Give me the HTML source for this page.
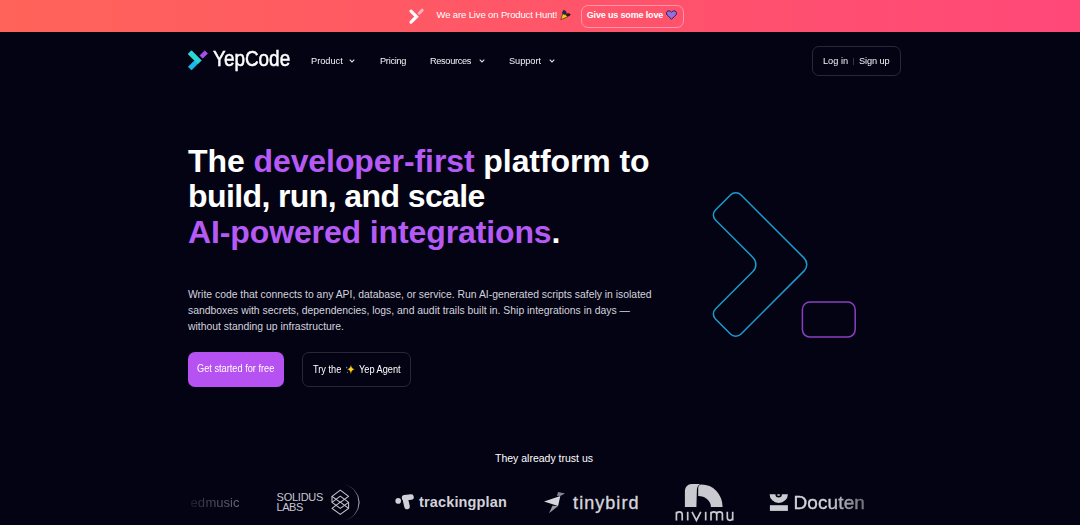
<!DOCTYPE html>
<html><head><meta charset="utf-8">
<style>
*{margin:0;padding:0;box-sizing:border-box}
html,body{width:1080px;height:525px;overflow:hidden;background:#030314;font-family:"Liberation Sans",sans-serif;color:#fff}
.a{position:absolute;white-space:nowrap;line-height:1}
svg.a{line-height:0}
#banner{position:absolute;left:0;top:0;width:1080px;height:32px;background:linear-gradient(90deg,#ff6359 0%,#ff4878 100%)}
.nav{font-size:9.6px;color:#f4f4f8;transform:scaleX(.96);transform-origin:0 0}
h1{position:absolute;left:188px;top:143.8px;font-size:32px;line-height:35.4px;font-weight:bold;white-space:nowrap}
h1 .p{color:#b65af6}
#para{position:absolute;left:188px;top:286.6px;font-size:10.4px;line-height:16px;color:#d4d4dc;white-space:nowrap}
</style></head>
<body>
<div id="banner"></div>
<svg class="a" style="left:405.6px;top:6.8px" width="22" height="20" viewBox="0 0 22 20">
  <path d="M5 4.2 L10.5 9.7 L5 15.2" stroke="#fff" stroke-width="3.2" fill="none" stroke-linecap="round" stroke-linejoin="miter"/>
  <path d="M13.2 6.2 L16.2 3.2" stroke="#ffb3c2" stroke-width="3" stroke-linecap="round"/>
</svg>
<div class="a" style="left:436.5px;top:10.3px;font-size:9.5px;letter-spacing:-0.13px">We are Live on Product Hunt!</div>
<!-- party popper -->
<svg class="a" style="left:559px;top:9px" width="13" height="12" viewBox="559 9 13 12">
  <path d="M560.8 19.6 L563.2 12.6 L567.6 16.8 Z" fill="#f0d21e" stroke="#2a2008" stroke-width=".6" stroke-linejoin="round"/>
  <path d="M562.3 13.2 L563.6 10.2 L565.6 11 L566.4 13.6 L564.2 14.6 Z" fill="#15305a" stroke="#0a1020" stroke-width=".5"/>
  <path d="M566.2 14.2 Q568.6 12.6 570.4 14.4 Q569.8 16.4 567.4 16.2 Z" fill="#3a1e16" stroke="#1a0c08" stroke-width=".5"/>
</svg>
<div class="a" style="left:581px;top:5px;width:103px;height:22.5px;border:1.5px solid #ff94ab;border-radius:7px"></div>
<div class="a" style="left:586.7px;top:10.7px;font-size:9px;font-weight:bold;letter-spacing:-0.15px">Give us some love</div>
<svg class="a" style="left:666px;top:10px" width="11" height="10" viewBox="0 0 11 10">
  <path d="M5.5 9.3 L1.2 5 C0 3.8 .3 1.6 1.9 1 C3.3 .5 4.6 1.2 5.5 2.3 C6.4 1.2 7.7 .5 9.1 1 C10.7 1.6 11 3.8 9.8 5 Z" fill="#9270ea" stroke="#2a1838" stroke-width=".9"/>
</svg>

<!-- header -->
<svg class="a" style="left:184px;top:46px" width="28" height="28" viewBox="184 46 28 28">
  <g stroke-width=".6" stroke-linejoin="round">
  <path d="M191.5 50.8 L201.1 60.4 L191.5 70 L188.3 66.8 L194.7 60.4 L188.3 54 Z" fill="#1bb8ea" stroke="#1bb8ea"/>
  <path d="M191.5 50.8 L201.1 60.4 L197.9 63.6 L188.3 54 Z" fill="#2bd6d0" stroke="#2bd6d0"/>
  <path d="M202.7 58.3 L207.6 53.5 L204.8 50.7 L199.9 55.5 Z" fill="#a94ff0" stroke="#a94ff0"/>
  </g>
</svg>
<div class="a" style="left:212.5px;top:48.1px;font-size:22px;transform:scaleX(.86);transform-origin:0 0;-webkit-text-stroke:.5px #fff">YepCode</div>
<div class="a nav" style="left:311px;top:56.4px">Product</div>
<div class="a nav" style="left:380px;top:56.4px;letter-spacing:-0.3px">Pricing</div>
<div class="a nav" style="left:430.4px;top:56.4px;letter-spacing:-0.35px">Resources</div>
<div class="a nav" style="left:508.9px;top:56.4px;letter-spacing:-0.05px">Support</div>
<svg class="a" style="left:349px;top:58.5px" width="6" height="4" viewBox="0 0 6 4"><path d="M.7 .7 L3 3 L5.3 .7" stroke="#dcdce4" stroke-width="1.1" fill="none"/></svg>
<svg class="a" style="left:479px;top:58.5px" width="6" height="4" viewBox="0 0 6 4"><path d="M.7 .7 L3 3 L5.3 .7" stroke="#dcdce4" stroke-width="1.1" fill="none"/></svg>
<svg class="a" style="left:548.5px;top:58.5px" width="6" height="4" viewBox="0 0 6 4"><path d="M.7 .7 L3 3 L5.3 .7" stroke="#dcdce4" stroke-width="1.1" fill="none"/></svg>
<div class="a" style="left:812px;top:46px;width:89px;height:29.5px;border:1px solid #282838;border-radius:7px"></div>
<div class="a nav" style="left:822.8px;top:56.2px">Log in</div>
<div class="a" style="left:853px;top:58px;width:1px;height:6.5px;background:#34344a"></div>
<div class="a nav" style="left:859px;top:56.2px;letter-spacing:-0.1px">Sign up</div>

<h1><span style="letter-spacing:-0.08px">The <span class="p">developer-first</span> platform to</span><br><span style="letter-spacing:-0.6px">build, run, and scale</span><br><span style="letter-spacing:-0.12px"><span class="p">AI-powered integrations</span>.</span></h1>

<div id="para">Write code that connects to any API, database, or service. Run AI-generated scripts safely in isolated<br>sandboxes with secrets, dependencies, logs, and audit trails built in. Ship integrations in days —<br>without standing up infrastructure.</div>

<div class="a" style="left:188px;top:352px;width:96px;height:35px;background:#b752f2;border-radius:7px"></div>
<div class="a" style="left:196.9px;top:364.2px;font-size:10px;transform:scaleX(.922);transform-origin:0 0">Get started for free</div>
<div class="a" style="left:302px;top:352px;width:109px;height:35px;border:1px solid #272735;border-radius:7px"></div>
<div class="a" style="left:312.6px;top:365.3px;font-size:10px;transform:scaleX(.92);transform-origin:0 0">Try the</div>
<svg class="a" style="left:345px;top:364px" width="11" height="11" viewBox="345 364 11 11">
  <path d="M350.9 365 Q351.4 368.6 354.6 369.3 Q351.4 370 350.9 373.9 Q350.4 370 347.2 369.3 Q350.4 368.6 350.9 365Z" fill="#ffd21f" stroke="#5a3a10" stroke-width=".35"/>
  <circle cx="346.6" cy="367.6" r=".8" fill="#2aa0d8"/>
  <circle cx="347.4" cy="372.4" r=".6" fill="#2aa0d8"/>
</svg>
<div class="a" style="left:359px;top:365.3px;font-size:10px;transform:scaleX(.92);transform-origin:0 0">Yep Agent</div>

<svg class="a" style="left:0;top:0" width="1080" height="525" viewBox="0 0 1080 525">
  <path d="M741.05,195.05 L804.14,258.14 A9,9 0 0 1 804.14,270.86 L741.05,333.95 A7.5,7.5 0 0 1 730.45,333.95 L715.45,318.95 A7,7 0 0 1 715.45,309.05 L752.93,271.57 A10,10 0 0 0 752.93,257.43 L715.45,219.95 A7,7 0 0 1 715.45,210.05 L730.45,195.05 A7.5,7.5 0 0 1 741.05,195.05 Z" fill="none" stroke="#1a9ccc" stroke-width="1.5"/>
  <rect x="802.4" y="302" width="52.8" height="35.1" rx="7.5" fill="none" stroke="#8a3fc0" stroke-width="1.5"/>
</svg>

<div class="a" style="left:495px;top:452.7px;font-size:10.5px">They already trust us</div>

<!-- logos -->
<div class="a" style="left:190.5px;top:495.7px;font-size:13px;color:#c8c8d0;-webkit-mask-image:linear-gradient(90deg,rgba(0,0,0,.12) 0%,rgba(0,0,0,.28) 30%,rgba(0,0,0,.5) 100%);mask-image:linear-gradient(90deg,rgba(0,0,0,.12) 0%,rgba(0,0,0,.28) 30%,rgba(0,0,0,.5) 100%)">ed<span style="margin-left:.5px">music</span></div>
<div class="a" style="left:276.6px;top:491.8px;font-size:11px;color:#c8c8d0;letter-spacing:-0.25px">SOLIDUS</div>
<div class="a" style="left:276.6px;top:502.4px;font-size:11px;color:#c8c8d0;letter-spacing:-0.5px">LABS</div>
<svg class="a" style="left:320px;top:480px" width="45" height="45" viewBox="320 480 45 45">
  <g fill="none" stroke="#c8c8d0" stroke-width="1.05" stroke-linejoin="round">
    <path d="M340.3 490.2 L348.6 496.3 L340.3 502.4 L332 496.3 Z"/>
    <path d="M340.3 496.2 L348.6 502.3 L340.3 508.4 L332 502.3 Z"/>
    <path d="M340.3 502.2 L348.6 508.3 L340.3 514.4 L332 508.3 Z"/>
    <path d="M332 496.3 L332 502.3 M348.6 502.3 L348.6 508.3"/>
  </g>
  <defs><linearGradient id="arcg" x1="0" y1="0" x2="0" y2="1"><stop offset="0" stop-color="#c8c8d0" stop-opacity="0"/><stop offset=".5" stop-color="#c8c8d0"/><stop offset="1" stop-color="#c8c8d0" stop-opacity="0"/></linearGradient></defs>
  <path d="M342.6 484.2 A18.4 18.4 0 0 1 342.6 520.8" fill="none" stroke="url(#arcg)" stroke-width="1"/>
</svg>
<svg class="a" style="left:390px;top:488px" width="30" height="27" viewBox="390 488 30 27">
  <circle cx="398.2" cy="500.9" r="2.8" fill="#d0d0d6"/>
  <path d="M404.6 497.8 L411 497" stroke="#d0d0d6" stroke-width="5.6" stroke-linecap="round"/>
  <path d="M405.2 498.5 L407 506.4" stroke="#d0d0d6" stroke-width="5.6" stroke-linecap="round"/>
</svg>
<div class="a" style="left:419px;top:494.6px;font-size:14.5px;font-weight:bold;color:#d2d2d8;letter-spacing:0.15px">trackingplan</div>
<svg class="a" style="left:538px;top:485px" width="32" height="33" viewBox="538 485 32 33">
  <path d="M544 501.5 L560.3 496 L558.1 506.1 Z" fill="#d6d6dc"/>
  <path d="M558.1 491.9 L565 493.5 L560.3 496 L556.9 495.7 Z" fill="#85858e"/>
  <path d="M552.5 505.8 L558.1 506.1 L549 513.3 Z" fill="#9a9aa2"/>
</svg>
<div class="a" style="left:573.1px;top:493.6px;font-size:18px;color:#d6d6dc;letter-spacing:1.05px;-webkit-text-stroke:.35px #d6d6dc">tinybird</div>
<svg class="a" style="left:670px;top:480px" width="70" height="45" viewBox="670 480 70 45">
  <path d="M684.9 506.9 L684.9 490.6 A6.6 6.6 0 0 1 691.5 484 L700.2 484 Q697.2 485.6 696.9 489.5 L696.4 506.9 Z" fill="#c9c9cf"/>
  <path d="M698.2 496 L698.2 488 Q698.4 484.5 701.5 484.4 A21.1 22.5 0 0 1 722.6 506.9 L710.9 506.9 A12.7 10.9 0 0 0 698.2 496 Z" fill="#c9c9cf"/>
  <g fill="none" stroke="#c9c9cf" stroke-width="1.7" stroke-linecap="butt">
    <path d="M676.4 520.4 L676.4 511.8 M676.4 514.5 Q676.4 511.9 679.3 511.9 Q682.2 511.9 682.2 514.5 L682.2 520.4"/>
    <path d="M687.7 511.8 L687.7 520.4"/>
    <path d="M692 511.8 L696.4 520.4 L700.8 511.8"/>
    <path d="M705.7 511.8 L705.7 520.4"/>
    <path d="M711 520.4 L711 511.8 M711 514.3 Q711 511.9 713.8 511.9 Q716.7 511.9 716.7 514.3 L716.7 520.4 M716.7 514.3 Q716.7 511.9 719.5 511.9 Q722.4 511.9 722.4 514.3 L722.4 520.4"/>
    <path d="M727.3 511.8 L727.3 517.6 Q727.3 520.3 730 520.3 Q732.7 520.3 732.7 517.6 L732.7 511.8 M732.7 511.8 L732.7 520.4"/>
  </g>
</svg>
<svg class="a" style="left:765px;top:488px" width="30" height="27" viewBox="765 488 30 27">
  <path d="M769.6 494.2 L787.9 494.2 A9.15 8.7 0 0 1 769.6 494.2 Z M775.4 494.2 A3.25 3.25 0 0 0 781.9 494.2 Z" fill="#cbcbd1" fill-rule="evenodd"/>
  <ellipse cx="778.6" cy="495" rx="1.6" ry="0.9" fill="#9a9aa2"/>
  <rect x="769.9" y="505.2" width="18" height="5.7" fill="#cbcbd1"/>
</svg>
<div class="a" style="left:793.5px;top:492.9px;font-size:19px;color:#d2d2d8;-webkit-text-stroke:.35px #d2d2d8;letter-spacing:0.1px;-webkit-mask-image:linear-gradient(90deg,#000 0%,#000 48%,rgba(0,0,0,.5) 100%);mask-image:linear-gradient(90deg,#000 0%,#000 48%,rgba(0,0,0,.5) 100%)">Docuten</div>

</body></html>
